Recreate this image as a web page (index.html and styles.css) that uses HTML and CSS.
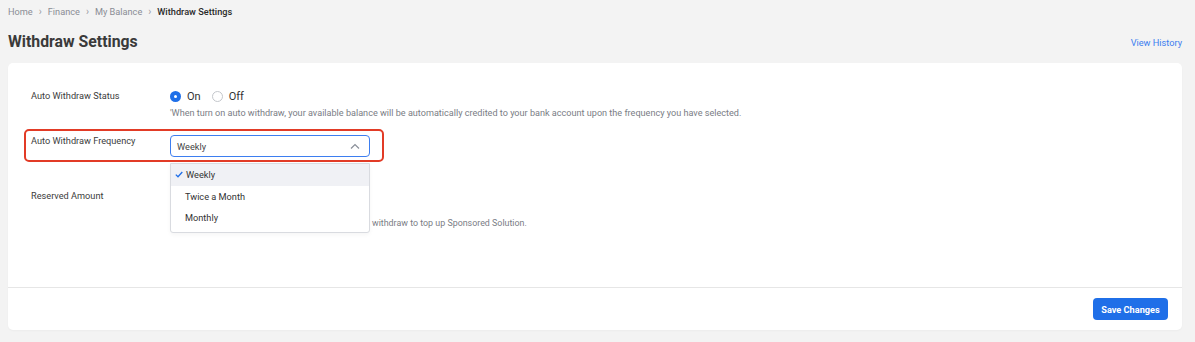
FILE: index.html
```html
<!DOCTYPE html>
<html>
<head>
<meta charset="utf-8">
<link rel="stylesheet" href="styles.css">
</head>
<body>
<div class="page">
  <nav class="crumbs">
    <span class="crumb">Home</span><span class="sep">›</span>
    <span class="crumb">Finance</span><span class="sep">›</span>
    <span class="crumb">My Balance</span><span class="sep">›</span>
    <span class="crumb current">Withdraw Settings</span>
  </nav>
  <div class="head">
    <h1 class="title">Withdraw Settings</h1>
    <a class="history">View History</a>
  </div>
  <div class="card">
    <div class="body">
      <div class="row row-status">
        <div class="label">Auto Withdraw Status</div>
        <div class="field">
          <div class="radios">
            <label class="radio"><span class="dot on"></span><span>On</span></label>
            <label class="radio"><span class="dot"></span><span>Off</span></label>
          </div>
          <div class="hint">'When turn on auto withdraw, your available balance will be automatically credited to your bank account upon the frequency you have selected.</div>
        </div>
      </div>
      <div class="row row-freq">
        <div class="highlight"></div>
        <div class="label">Auto Withdraw Frequency</div>
        <div class="field">
          <div class="select">
            <span>Weekly</span>
            <svg class="chev" width="10" height="6" viewBox="0 0 10 6"><path d="M1 5.5 L5 1.5 L9 5.5" fill="none" stroke="#8a8f99" stroke-width="1.2"/></svg>
          </div>
          <div class="menu">
            <div class="opt sel"><svg class="check" width="8" height="7" viewBox="0 0 8 7"><path d="M0.8 3.6 L3 5.8 L7.3 1" fill="none" stroke="#1f6fe8" stroke-width="1.3"/></svg>Weekly</div>
            <div class="opt">Twice a Month</div>
            <div class="opt">Monthly</div>
          </div>
        </div>
      </div>
      <div class="row row-reserved">
        <div class="label">Reserved Amount</div>
        <div class="field">
          <div class="input"></div>
          <div class="hint hint-reserved">withdraw to top up Sponsored Solution.</div>
        </div>
      </div>
    </div>
    <div class="foot">
      <button class="save">Save Changes</button>
    </div>
  </div>
</div>
</body>
</html>
```
FILE: styles.css
```css
* { box-sizing: border-box; }
html, body { margin: 0; padding: 0; }
body {
  background: #f3f3f3;
  font-family: Roboto, "Liberation Sans", sans-serif;
  color: #333;
  width: 1195px;
  height: 342px;
  overflow: hidden;
}
.page { padding: 4px 13px 0 8px; }
.crumbs {
  display: flex;
  align-items: center;
  font-size: 9.2px;
  height: 14px;
  color: #8a8d95;
}
.sep { margin: 0 6px; color: #9a9ca3; font-size: 10px; }
.crumb.current { color: #2a2a2a; font-weight: 500; }
.head {
  display: flex;
  justify-content: space-between;
  align-items: center;
  margin-top: 15px;
  height: 16px;
}
.title {
  margin: 0;
  font-size: 15.8px;
  font-weight: 700;
  color: #3a3a3a;
}
.history {
  font-size: 9.2px;
  color: #3d7ef0;
  padding-top: 3px;
}
.card {
  margin-top: 14px;
  background: #fff;
  border-radius: 5px;
  height: 267px;
  display: flex;
  flex-direction: column;
  box-shadow: 0 1px 2px rgba(0,0,0,0.03);
}
.body { flex: 1; padding: 27px 0 0 23px; }
.row { display: flex; position: relative; }
.label {
  width: 139px;
  font-size: 9.2px;
  color: #3c3c3c;
  line-height: 12px;
}
.field { position: relative; }
.radios { display: flex; gap: 11px; align-items: center; height: 12px; }
.radio { display: flex; align-items: center; gap: 6px; font-size: 11px; color: #333; }
.dot {
  width: 11px; height: 11px; border-radius: 50%;
  border: 1px solid #c4c7cc; background: #fff;
  position: relative;
}
.dot.on { border: none; background: #1f6fe8; }
.dot.on::after {
  content: ""; position: absolute; left: 4px; top: 4px;
  width: 3px; height: 3px; border-radius: 50%; background: #fff;
}
.hint {
  margin-top: 5px;
  font-size: 9.1px;
  line-height: 12px;
  color: #7a7d85;
  white-space: nowrap;
}
.row-freq { margin-top: 16px; }
.highlight {
  position: absolute;
  left: -7px; top: -6px;
  width: 360px; height: 33px;
  border: 2px solid #e23b26;
  border-radius: 5px;
  pointer-events: none;
}
.select {
  width: 200px; height: 22px;
  border: 1px solid #3d7ef0;
  border-radius: 4px;
  display: flex; align-items: center; justify-content: space-between;
  padding: 0 9px 0 6px;
  font-size: 9.2px; color: #444;
  background: #fff;
}
.menu {
  position: absolute;
  left: 0; top: 28px;
  width: 200px;
  background: #fff;
  border: 1px solid #d9dbe0;
  border-radius: 0 0 3px 3px;
  padding: 0 0 3px;
  z-index: 5;
  box-shadow: 0 2px 4px rgba(0,0,0,0.04);
}
.opt {
  height: 21.5px;
  display: flex; align-items: center;
  padding-left: 14px;
  font-size: 9.2px;
  color: #333;
}
.opt.sel { background: #f0f1f5; padding-left: 4px; }
.check { margin-right: 3px; }
.row-reserved { margin-top: 33px; }
.input {
  width: 200px; height: 22px;
  border: 1px solid #d9dbe0;
  border-radius: 4px;
  margin-top: -5px;
}
.hint-reserved { margin-top: 10px; padding-left: 202px; font-size: 8.9px; }
.foot {
  border-top: 1px solid #e6e6e6;
  height: 43px;
  display: flex;
  justify-content: flex-end;
  align-items: center;
  padding-right: 14px;
}
.save {
  background: #1f6fe8;
  color: #fff;
  border: none;
  border-radius: 4px;
  height: 22px;
  width: 75px;
  font-family: Roboto, "Liberation Sans", sans-serif;
  font-size: 9.2px;
  font-weight: 700;
  padding: 0;
}
```
